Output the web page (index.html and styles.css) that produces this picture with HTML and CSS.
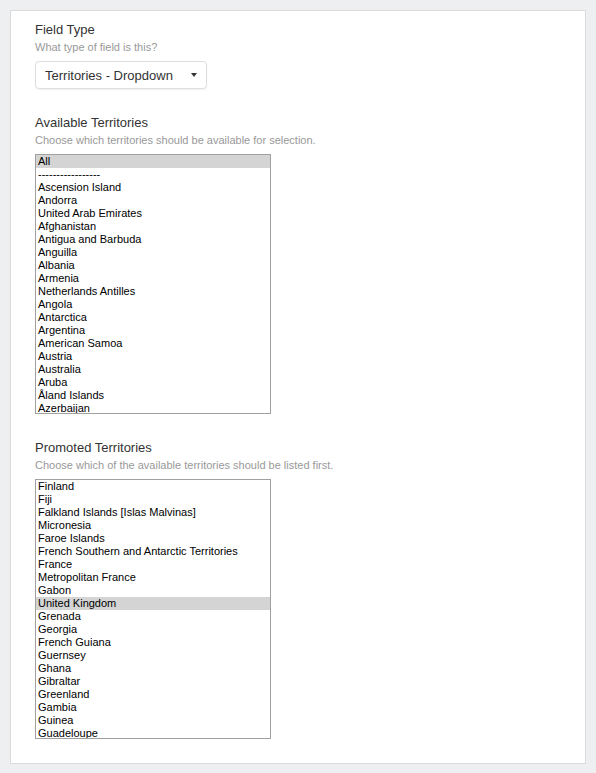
FILE: index.html
```html
<!DOCTYPE html>
<html>
<head>
<meta charset="utf-8">
<link rel="stylesheet" href="styles.css">
</head>
<body>
<div class="card">
  <div class="field">
    <div class="label">Field Type</div>
    <div class="help">What type of field is this?</div>
    <div class="dropdown">
      <span class="dropdown-text">Territories - Dropdown</span>
      <span class="caret"></span>
    </div>
  </div>
  <div class="field">
    <div class="label">Available Territories</div>
    <div class="help">Choose which territories should be available for selection.</div>
    <div class="listbox" role="listbox">
      <div class="opt selected">All</div>
      <div class="opt">-----------------</div>
      <div class="opt">Ascension Island</div>
      <div class="opt">Andorra</div>
      <div class="opt">United Arab Emirates</div>
      <div class="opt">Afghanistan</div>
      <div class="opt">Antigua and Barbuda</div>
      <div class="opt">Anguilla</div>
      <div class="opt">Albania</div>
      <div class="opt">Armenia</div>
      <div class="opt">Netherlands Antilles</div>
      <div class="opt">Angola</div>
      <div class="opt">Antarctica</div>
      <div class="opt">Argentina</div>
      <div class="opt">American Samoa</div>
      <div class="opt">Austria</div>
      <div class="opt">Australia</div>
      <div class="opt">Aruba</div>
      <div class="opt">Åland Islands</div>
      <div class="opt">Azerbaijan</div>
    </div>
  </div>
  <div class="field last">
    <div class="label">Promoted Territories</div>
    <div class="help">Choose which of the available territories should be listed first.</div>
    <div class="listbox" role="listbox">
      <div class="opt">Finland</div>
      <div class="opt">Fiji</div>
      <div class="opt">Falkland Islands [Islas Malvinas]</div>
      <div class="opt">Micronesia</div>
      <div class="opt">Faroe Islands</div>
      <div class="opt">French Southern and Antarctic Territories</div>
      <div class="opt">France</div>
      <div class="opt">Metropolitan France</div>
      <div class="opt">Gabon</div>
      <div class="opt selected">United Kingdom</div>
      <div class="opt">Grenada</div>
      <div class="opt">Georgia</div>
      <div class="opt">French Guiana</div>
      <div class="opt">Guernsey</div>
      <div class="opt">Ghana</div>
      <div class="opt">Gibraltar</div>
      <div class="opt">Greenland</div>
      <div class="opt">Gambia</div>
      <div class="opt">Guinea</div>
      <div class="opt">Guadeloupe</div>
    </div>
  </div>
</div>
</body>
</html>
```
FILE: styles.css
```css
html, body {
  margin: 0;
  padding: 0;
}
body {
  background: #eeeff1;
  padding: 10px 10px 11px 10px;
  font-family: "Liberation Sans", Arial, Helvetica, sans-serif;
  color: #333;
}
.card {
  background: #fff;
  border: 1px solid #dadbdd;
  padding: 9px 24px 24px 24px;
}
.field {
  margin-bottom: 24px;
}
.field.last {
  margin-bottom: 0;
}
.label {
  font-size: 13px;
  line-height: 19px;
  color: #333;
}
.help {
  font-size: 11px;
  line-height: 16px;
  color: #999;
  margin-bottom: 6px;
}
.dropdown {
  margin-top: 5px;
  width: 172px;
  height: 28px;
  box-sizing: border-box;
  border: 1px solid #dedede;
  border-radius: 4px;
  box-shadow: 0 1px 2px rgba(0, 0, 0, 0.06);
  display: flex;
  align-items: center;
  padding: 0 9px;
  font-size: 13px;
  color: #333;
}
.dropdown-text {
  flex: 1;
}
.caret {
  width: 0;
  height: 0;
  border-left: 3.5px solid transparent;
  border-right: 3.5px solid transparent;
  border-top: 4px solid #333;
}
.listbox {
  width: 236px;
  height: 260px;
  box-sizing: border-box;
  border: 1px solid #a0a0a0;
  overflow: hidden;
  font-size: 11px;
  color: #000;
}
.opt {
  height: 13px;
  line-height: 13px;
  padding: 0 2px;
  white-space: nowrap;
}
.opt.selected {
  background: #d4d4d4;
}
```
